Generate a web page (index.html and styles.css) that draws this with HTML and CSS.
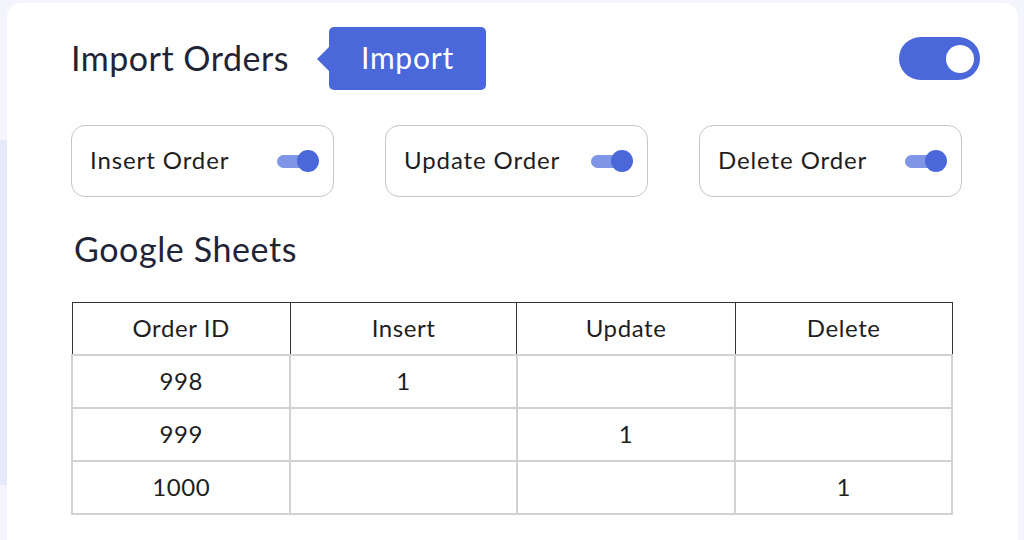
FILE: index.html
```html
<!DOCTYPE html>
<html lang="en">
<head>
  <meta charset="UTF-8" />
  <title>Import Orders</title>
  <link rel="stylesheet" href="styles.css">
</head>
<body>

<div class="card">
  <!-- header: title, tag, master switch -->
  <div class="head">
    <h1 class="title">Import Orders</h1>
    <span class="tag">Import</span>
    <span class="switch"><span class="knob"></span></span>
  </div>

  <!-- per-action options -->
  <div class="options">
    <div class="option">
      <span class="label">Insert Order</span>
      <span class="mini"><span class="rail"></span><span class="dot"></span></span>
    </div>
    <div class="option">
      <span class="label">Update Order</span>
      <span class="mini"><span class="rail"></span><span class="dot"></span></span>
    </div>
    <div class="option">
      <span class="label">Delete Order</span>
      <span class="mini"><span class="rail"></span><span class="dot"></span></span>
    </div>
  </div>

  <h2 class="subtitle">Google Sheets</h2>

  <table class="sheet">
    <thead>
      <tr>
        <th class="c1">Order ID</th>
        <th class="c2">Insert</th>
        <th class="c3">Update</th>
        <th class="c4">Delete</th>
      </tr>
    </thead>
    <tbody>
      <tr><td>998</td><td>1</td><td></td><td></td></tr>
      <tr><td>999</td><td></td><td>1</td><td></td></tr>
      <tr><td>1000</td><td></td><td></td><td>1</td></tr>
    </tbody>
  </table>
</div>

</body>
</html>
```

FILE: styles.css
```css
html, body {
  height: 100%;
}

body {
  font-family: 'Lato', 'Open Sans', sans-serif;
  margin: 0;
  background:
    linear-gradient(#e4eafb, #e4eafb) 0 140px / 7px 345px no-repeat,
    #f4f5fc;
  overflow: hidden;
}

.card {
  margin: 3px 6px 0 7px;
  min-height: 560px;
  background: #fff;
  border-radius: 14px 14px 0 0;
  padding: 24px 38px 0 64px;
  box-sizing: border-box;
}

.head {
  display: flex;
  align-items: center;
  height: 63px;
}

.title {
  margin: 0 0 3px;
  font-size: 34px;
  font-weight: 400;
  letter-spacing: 0.5px;
  color: #1f2537;
}

.tag {
  position: relative;
  margin-left: 40px;
  height: 63px;
  box-sizing: border-box;
  padding: 0 32px 3px;
  display: flex;
  align-items: center;
  background: #4a68d9;
  color: #fff;
  font-size: 30px;
  letter-spacing: 0.8px;
  border-radius: 5px;
}

.tag::before {
  content: "";
  position: absolute;
  left: -12px;
  top: 20px;
  border-right: 12px solid #4a68d9;
  border-top: 12px solid transparent;
  border-bottom: 12px solid transparent;
}

.switch {
  margin-left: auto;
  width: 81px;
  height: 43px;
  border-radius: 22px;
  background: #4a68d9;
  display: flex;
  align-items: center;
  justify-content: flex-end;
  padding: 0 6px;
  box-sizing: border-box;
}

.switch .knob {
  width: 28px;
  height: 28px;
  border-radius: 50%;
  background: #fff;
}

.options {
  display: flex;
  gap: 51px;
  margin-top: 35px;
}

.option {
  width: 263px;
  height: 72px;
  box-sizing: border-box;
  border: 1px solid #c6c6c6;
  border-radius: 14px;
  display: flex;
  align-items: center;
  justify-content: space-between;
  padding: 0 14px 0 18px;
  font-size: 24px;
  letter-spacing: 0.9px;
  color: #1e1e1e;
}

.option .label {
  padding-bottom: 3px;
}

.mini {
  display: flex;
  align-items: center;
}

.mini .rail {
  width: 36px;
  height: 13px;
  border-radius: 7px;
  background: #7f96e6;
}

.mini .dot {
  width: 22px;
  height: 22px;
  border-radius: 50%;
  background: #4a68d9;
  margin-left: -16px;
}

.subtitle {
  margin: 34px 0 35px 3px;
  font-size: 34px;
  font-weight: 400;
  letter-spacing: 0.6px;
  line-height: 36px;
  color: #1f2537;
}

.sheet {
  width: 882px;
  border-collapse: collapse;
  font-size: 24px;
  letter-spacing: 0.6px;
  color: #1e1e1e;
}

.sheet th,
.sheet td {
  height: 49px;
  padding: 0 0 2px;
  text-align: center;
  font-weight: 400;
}

.sheet th {
  border: 1px solid #333;
}

.sheet td {
  border: 2px solid #d2d2d2;
}

.sheet .c1 { width: 219px; }
.sheet .c2 { width: 227px; }
.sheet .c3 { width: 219px; }
.sheet .c4 { width: 217px; }
```
